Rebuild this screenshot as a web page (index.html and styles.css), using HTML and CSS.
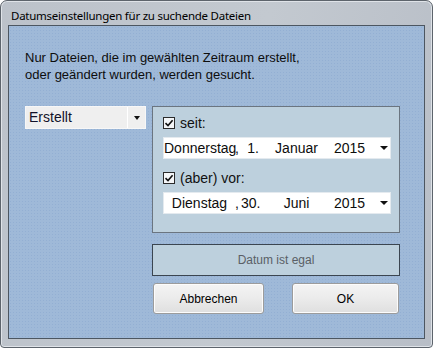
FILE: index.html
```html
<!DOCTYPE html>
<html lang="de">
<head>
    <meta charset="UTF-8" />
    <title>Datumseinstellungen</title>
    <link rel="stylesheet" href="styles.css">
</head>
<body>

    <div class="window">
        <div class="title">Datumseinstellungen für zu suchende Dateien</div>

        <div class="client">
            <p class="intro">Nur Dateien, die im gewählten Zeitraum erstellt,<br>oder geändert wurden, werden gesucht.</p>

            <div class="combo">
                <span class="combo-text">Erstellt</span>
                <span class="combo-btn"><span class="arrow"></span></span>
            </div>

            <div class="range">
                <label class="check-row">
                    <svg class="check" width="12" height="12" viewBox="0 0 12 12">
                        <rect x="0.5" y="0.5" width="11" height="11" fill="#f4f6f8" stroke="#2b2b2b" />
                        <path d="M2.5 6.2 L5 8.6 L9.6 3.2" fill="none" stroke="#111" stroke-width="1.6" />
                    </svg>
                    seit:
                </label>
                <div class="date-field">
                    <span class="wd">Donnerstag</span><span class="comma">,</span>
                    <span class="day">1.</span>
                    <span class="mon">Januar</span>
                    <span class="yr">2015</span>
                    <span class="arrow"></span>
                </div>

                <label class="check-row second">
                    <svg class="check" width="12" height="12" viewBox="0 0 12 12">
                        <rect x="0.5" y="0.5" width="11" height="11" fill="#f4f6f8" stroke="#2b2b2b" />
                        <path d="M2.5 6.2 L5 8.6 L9.6 3.2" fill="none" stroke="#111" stroke-width="1.6" />
                    </svg>
                    (aber) vor:
                </label>
                <div class="date-field">
                    <span class="wd">Dienstag</span><span class="comma">,</span>
                    <span class="day">30.</span>
                    <span class="mon">Juni</span>
                    <span class="yr">2015</span>
                    <span class="arrow"></span>
                </div>
            </div>

            <button class="egal">Datum ist egal</button>

            <div class="actions">
                <button class="btn">Abbrechen</button>
                <button class="btn">OK</button>
            </div>
        </div>
    </div>

</body>
</html>
```

FILE: styles.css
```css
body {
    margin: 0;
    font-family: "Liberation Sans", Arial, sans-serif;
    background-color: #fff;
}

.window {
    width: 433px;
    height: 348px;
    box-sizing: border-box;
    border: 1px solid #5d646c;
    border-radius: 7px 7px 4px 4px;
    background: linear-gradient(100deg, #bcc2ca 0%, #c3c9d0 55%, #b8bec7 100%);
    box-shadow: inset 0 0 0 1px #dfe3e8;
    padding: 0 7px;
}

.title {
    height: 24px;
    line-height: 30px;
    padding-left: 3px;
    font-family: "Noto Sans", "Open Sans", sans-serif;
    font-size: 11.5px;
    color: #000;
    letter-spacing: -0.25px;
}

.client {
    height: 314px;
    box-sizing: border-box;
    border: 1px solid #4c5661;
    background-color: #9fb9d8;
    background-image: radial-gradient(#93afd3 0.6px, transparent 0.8px);
    background-size: 3px 3px;
    display: grid;
    grid-template-columns: 121px 248px;
    grid-template-rows: auto auto auto auto;
    column-gap: 6px;
    align-content: start;
    padding-left: 16px;
}

.intro {
    grid-column: 1 / 3;
    margin: 23px 0 0;
    font-size: 13px;
    line-height: 17px;
    color: #0d0d0d;
}

.combo {
    margin-top: 23px;
    height: 23px;
    box-sizing: border-box;
    background-color: #efefef;
    border: 1px solid #f7f7f7;
    display: flex;
    align-self: start;
}

.combo-text {
    flex: 1;
    font-size: 14px;
    line-height: 21px;
    padding-left: 3px;
    color: #12122a;
}

.combo-btn {
    width: 17px;
    border-left: 1px solid #fff;
    display: flex;
    align-items: center;
    justify-content: center;
}

.arrow {
    width: 0;
    height: 0;
    border-left: 3.5px solid transparent;
    border-right: 3.5px solid transparent;
    border-top: 4px solid #111;
}

.range {
    margin-top: 23px;
    height: 127px;
    box-sizing: border-box;
    border: 1px solid #6b7580;
    background-color: #bdd0dd;
    padding: 9px 8px 0 10px;
}

.check-row {
    display: flex;
    align-items: center;
    gap: 5px;
    height: 14px;
    font-size: 14px;
    color: #111;
}

.check-row.second {
    margin-top: 12px;
}

.date-field {
    margin-top: 7px;
    height: 22px;
    box-sizing: border-box;
    background-color: #fff;
    border: 1px solid #e4eaef;
    display: flex;
    align-items: center;
    font-size: 14px;
    color: #0d0d0d;
}

.date-field .wd {
    width: 71px;
    text-align: center;
}

.date-field .comma {
    width: 6px;
}

.date-field .day {
    width: 18px;
    text-align: right;
}

.date-field .mon {
    width: 75px;
    text-align: center;
}

.date-field .yr {
    width: 46px;
}

.date-field .arrow {
    border-left-width: 4px;
    border-right-width: 4px;
    border-top-width: 4px;
}

.egal {
    grid-column: 2;
    margin-top: 11px;
    height: 32px;
    border: 1px solid #3b4550;
    background-color: #bdd0dd;
    font-family: "Liberation Sans", Arial, sans-serif;
    font-size: 12px;
    color: #5a5f66;
    padding: 0;
}

.actions {
    grid-column: 2;
    margin-top: 7px;
    display: flex;
    justify-content: space-between;
    padding: 0 1px;
}

.btn {
    width: 111px;
    height: 31px;
    border: 1px solid #9c9c9c;
    border-radius: 3px;
    background: linear-gradient(#f4f4f4, #ebebeb 50%, #dfdfdf);
    box-shadow: inset 0 0 0 1px #fcfcfc;
    font-family: "Liberation Sans", Arial, sans-serif;
    font-size: 12px;
    color: #000;
    padding: 0;
}

.btn + .btn {
    width: 107px;
}
```
